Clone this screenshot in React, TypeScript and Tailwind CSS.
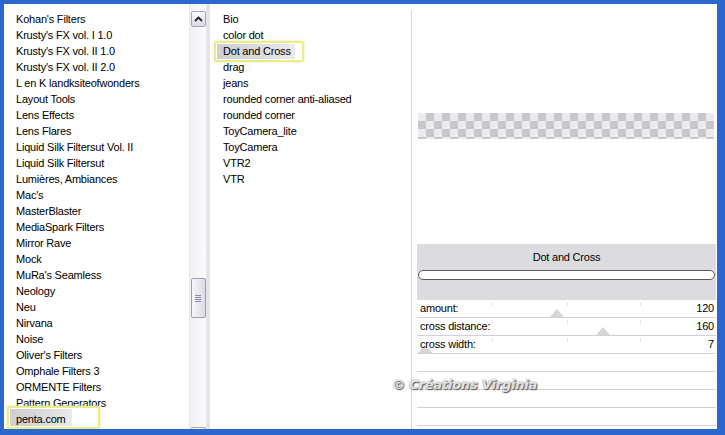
import type { ReactNode } from 'react';

const LEFT_ITEMS = [
    "Kohan's Filters",
    "Krusty's FX vol. I 1.0",
    "Krusty's FX vol. II 1.0",
    "Krusty's FX vol. II 2.0",
    'L en K landksiteofwonders',
    'Layout Tools',
    'Lens Effects',
    'Lens Flares',
    'Liquid Silk Filtersut Vol. II',
    'Liquid Silk Filtersut',
    'Lumières, Ambiances',
    "Mac's",
    'MasterBlaster',
    'MediaSpark Filters',
    'Mirror Rave',
    'Mock',
    "MuRa's Seamless",
    'Neology',
    'Neu',
    'Nirvana',
    'Noise',
    "Oliver's Filters",
    'Omphale Filters 3',
    'ORMENTE Filters',
    'Pattern Generators',
    'penta.com',
];

const MIDDLE_ITEMS = [
    'Bio',
    'color dot',
    'Dot and Cross',
    'drag',
    'jeans',
    'rounded corner anti-aliased',
    'rounded corner',
    'ToyCamera_lite',
    'ToyCamera',
    'VTR2',
    'VTR',
];

const PARAMS = [
    { label: 'amount:', value: '120', thumb: 140 },
    { label: 'cross distance:', value: '160', thumb: 186 },
    { label: 'cross width:', value: '7', thumb: 8 },
];

interface HighlightProps {
    width: number;
    fill: number;
    top: number;
    height: number;
}

function Highlight({ width, fill, top, height }: HighlightProps) {
    return (
        <div
            className="absolute -left-[9px] rounded-[2px] border-2 border-[#ecec86] bg-white/80 shadow-[0_0_3px_#e6e69a]"
            style={{ width, top, height }}
        >
            <div
                className="mt-[1px] ml-[1px] bg-gradient-to-r from-[#cfcfd2] via-[#dadadc] to-[#ebebed]"
                style={{ width: fill, height: height - 6 }}
            />
        </div>
    );
}

function ListItem({
    children,
    highlight,
}: {
    children: ReactNode;
    highlight?: HighlightProps;
}) {
    return (
        <div className="relative h-[16px] leading-[16px] whitespace-nowrap">
            {highlight && <Highlight {...highlight} />}
            <span className="relative">{children}</span>
        </div>
    );
}

function Triangle({ left }: { left: number }) {
    return (
        <svg
            className="absolute bottom-0"
            style={{ left: left - 7 }}
            width="14"
            height="8"
            viewBox="0 0 14 8"
        >
            <polygon points="7,0 14,8 0,8" fill="#d6d6da" />
        </svg>
    );
}

function ParamRow({
    label,
    value,
    thumb,
}: {
    label?: string;
    value?: string;
    thumb?: number;
}) {
    return (
        <div className="relative flex h-[18px] items-center justify-between border-b border-[#d2d2d6] pr-[2px] pl-[3px]">
            {label && (
                <>
                    <span className="absolute top-[2px] left-[75px] h-[4px] w-px bg-[#e6e6ea]" />
                    <span className="absolute top-[2px] left-[150px] h-[4px] w-px bg-[#e6e6ea]" />
                    <span className="absolute top-[2px] left-[223px] h-[4px] w-px bg-[#e6e6ea]" />
                </>
            )}
            {thumb !== undefined && <Triangle left={thumb} />}
            <span className="relative">{label}</span>
            <span className="relative">{value}</span>
        </div>
    );
}

export default function App() {
    return (
        <div className="relative flex h-[435px] w-[725px] bg-[#2b67cc] pt-[4px] pr-[8px] pb-[6px] pl-[4px] font-['Liberation_Sans',Arial,sans-serif] text-[11px] tracking-[-0.2px] text-black">
            <div className="flex flex-1 bg-white">
                {/* filter categories */}
                <div className="w-[185px] overflow-hidden pt-[7px] pl-[12px]">
                    {LEFT_ITEMS.map((item) => (
                        <ListItem
                            key={item}
                            highlight={
                                item === 'penta.com'
                                    ? { width: 93, fill: 62, top: -5, height: 23 }
                                    : undefined
                            }
                        >
                            {item}
                        </ListItem>
                    ))}
                </div>

                {/* scrollbar */}
                <div className="flex w-[17px] flex-col items-center border-l border-[#e6e6ec] bg-gradient-to-r from-[#f1f1f5] to-[#fafafd]">
                    <div className="mt-[7px] flex h-[16px] w-[15px] items-center justify-center rounded-[2px] border border-[#a6a6b6] bg-gradient-to-b from-[#fbfbff] to-[#dadae6]">
                        <svg width="9" height="6" viewBox="0 0 9 6">
                            <path
                                d="M1 5 L4.5 1.5 L8 5"
                                stroke="#222"
                                strokeWidth="1.8"
                                fill="none"
                            />
                        </svg>
                    </div>
                    <div className="mt-[251px] flex h-[40px] w-[15px] flex-col items-center justify-center gap-[1px] rounded-[2px] border border-[#9c9cb2] bg-gradient-to-r from-[#f6f6fc] to-[#dcdcea]">
                        <span className="h-px w-[6px] bg-[#8c8ca0]" />
                        <span className="h-px w-[6px] bg-[#8c8ca0]" />
                        <span className="h-px w-[6px] bg-[#8c8ca0]" />
                        <span className="h-px w-[6px] bg-[#8c8ca0]" />
                    </div>
                    <div className="mt-auto h-[2px] w-[15px] rounded-t-[2px] border border-b-0 border-[#a6a6b6]" />
                </div>
                <div className="w-[4px] bg-[#e4e4ea]" />

                {/* filters */}
                <div className="w-[201px] overflow-hidden pt-[7px] pl-[13px]">
                    {MIDDLE_ITEMS.map((item) => (
                        <ListItem
                            key={item}
                            highlight={
                                item === 'Dot and Cross'
                                    ? { width: 90, fill: 78, top: -2, height: 21 }
                                    : undefined
                            }
                        >
                            {item}
                        </ListItem>
                    ))}
                </div>

                {/* preview + params */}
                <div className="flex flex-1 flex-col">
                    <div className="mt-[6px] flex flex-1 flex-col border-l border-[#d6d6dc] pl-[5px]">
                        <div className="mt-[103px] ml-[1px] h-[26px] w-[296px] bg-[conic-gradient(#c8c8cc_25%,#ebebef_0_50%,#c8c8cc_0_75%,#ebebef_0)] bg-[length:16px_16px]" />
                        <div className="mt-[105px] flex h-[56px] w-[299px] flex-col bg-[#dcdce0]">
                            <div className="mt-[3px] h-[20px] text-center leading-[20px]">
                                Dot and Cross
                            </div>
                            <div className="mx-[1px] mt-[3px] h-[10px] rounded-full border border-[#5a5a5e] bg-white" />
                        </div>
                        <div className="w-[299px]">
                            {PARAMS.map((p) => (
                                <ParamRow key={p.label} {...p} />
                            ))}
                            <ParamRow />
                            <ParamRow />
                            <ParamRow />
                            <ParamRow />
                        </div>
                    </div>
                </div>
            </div>

            {/* watermark */}
            <div className="absolute top-[375px] left-[392px] font-['DejaVu_Sans',sans-serif] text-[13px] font-bold italic tracking-[-0.2px] text-[#e2e2e6] [text-shadow:1px_1px_1px_#555,0_0_2px_#888]">
                © Créations Virginia
            </div>
        </div>
    );
}
